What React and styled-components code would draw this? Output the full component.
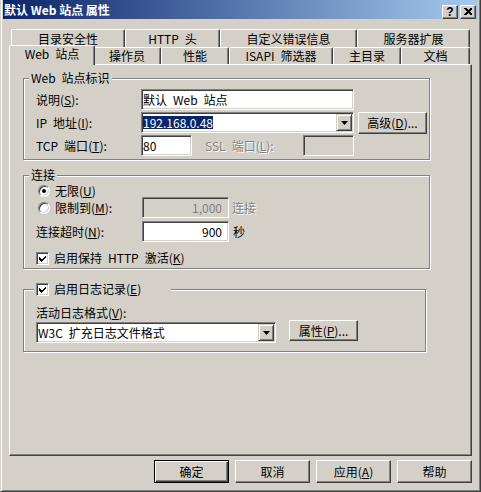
import React from 'react';
import styled, { createGlobalStyle, css } from 'styled-components';

const FACE = '#D4D0C8';
const SHADOW = '#808080';
const DARK = '#404040';
const SP = '\u2002';

const GlobalStyle = createGlobalStyle`
  html, body { margin: 0; padding: 0; background: ${FACE}; }
  body {
    font-family: "Noto Sans CJK SC", "Noto Sans", sans-serif;
    font-size: 12px;
    line-height: 14px;
    color: #000;
  }
  *, *::before, *::after { box-sizing: border-box; }
  u { text-decoration: underline; text-underline-offset: 1px; }
`;

const Window = styled.div`
  width: 481px;
  height: 492px;
  display: flex;
  flex-direction: column;
  background: ${FACE};
  border-left: 1px solid ${FACE};
  border-right: 1px solid ${DARK};
  border-bottom: 1px solid ${DARK};
  box-shadow: inset 1px 0 #fff, inset -1px -1px ${SHADOW};
  padding: 0 2px 2px 2px;
`;

const TitleBar = styled.div`
  height: 19px;
  flex: none;
  display: flex;
  align-items: flex-start;
  background: linear-gradient(to right, #0a246a, #a6caf0);
  padding: 0 2px 0 1px;
`;

const TitleText = styled.div`
  flex: 1;
  color: #fff;
  font-weight: bold;
  font-size: 12px;
  line-height: 19px;
  white-space: nowrap;
`;

const CaptionButtons = styled.div`
  display: flex;
  gap: 2px;
  margin-top: 5px;
`;

const CaptionButton = styled.div`
  width: 16px;
  height: 14px;
  background: ${FACE};
  border: 1px solid;
  border-color: #fff ${DARK} ${DARK} #fff;
  box-shadow: inset -1px -1px ${SHADOW};
  display: flex;
  align-items: center;
  justify-content: center;
  font: bold 12px/12px "Liberation Sans", Arial, sans-serif;
  padding-bottom: 1px;
`;

const Body = styled.div`
  flex: 1;
  display: flex;
  flex-direction: column;
  padding: 10px 6px 6px 6px;
`;

const TabRow = styled.div`
  display: flex;
  flex: none;
  height: ${(p) => p.$h}px;
  padding-left: 2px;
`;

const Tab = styled.div`
  width: ${(p) => p.$w}px;
  flex: none;
  display: flex;
  align-items: center;
  justify-content: center;
  background: ${FACE};
  border-top: 1px solid #fff;
  border-left: 1px solid #fff;
  border-right: 1px solid ${DARK};
  box-shadow: inset -1px 0 ${SHADOW};
  border-radius: 2px 2px 0 0;
  white-space: nowrap;
  ${(p) =>
    p.$active &&
    css`
      position: relative;
      z-index: 1;
      width: ${p.$w + 4}px;
      margin: -2px -2px -1px -2px;
      padding-bottom: 3px;
    `}
`;

const Panel = styled.div`
  height: 392px;
  flex: none;
  border: 1px solid;
  border-color: #fff ${DARK} ${DARK} #fff;
  box-shadow: inset -1px -1px ${SHADOW};
  padding: 6px 0 0 13px;
  display: flex;
  flex-direction: column;
  align-items: flex-start;
`;

const Group = styled.fieldset`
  width: ${(p) => p.$w}px;
  margin: ${(p) => p.$mt || 0}px 0 0 0;
  padding: 0;
  min-width: 0;
  border: 1px solid ${SHADOW};
  box-shadow: inset 1px 1px #fff, 1px 1px #fff;
`;

const Legend = styled.legend`
  margin-left: ${(p) => p.$ml}px;
  padding: 0 2px;
  height: 14px;
  line-height: 14px;
  width: ${(p) => (p.$w ? `${p.$w}px` : 'auto')};
  background: ${FACE};
  white-space: nowrap;
`;

const LegendInner = styled.span`
  display: flex;
  align-items: center;
  gap: 5px;
  height: 14px;
  white-space: nowrap;
`;

const GroupBody = styled.div`
  display: flex;
  flex-direction: column;
  padding: ${(p) => p.$pad};
`;

const Row = styled.div`
  display: flex;
  align-items: ${(p) => p.$align || 'center'};
  height: ${(p) => p.$h || 21}px;
  margin-top: ${(p) => p.$mt || 0}px;
  flex: none;
`;

const Label = styled.span`
  flex: none;
  display: flex;
  align-items: center;
  gap: 5px;
  width: ${(p) => (p.$w ? `${p.$w}px` : 'auto')};
  height: ${(p) => (p.$h ? `${p.$h}px` : 'auto')};
  margin-left: ${(p) => p.$ml || 0}px;
  white-space: nowrap;
  color: ${(p) => (p.$disabled ? SHADOW : '#000')};
  text-shadow: ${(p) => (p.$disabled ? '1px 1px 0 #fff' : 'none')};
`;

const Field = styled.div`
  width: ${(p) => p.$w}px;
  height: 21px;
  flex: none;
  display: flex;
  align-items: center;
  justify-content: ${(p) => (p.$right ? 'flex-end' : 'flex-start')};
  background: ${(p) => (p.$disabled ? FACE : '#fff')};
  color: ${(p) => (p.$disabled ? SHADOW : '#000')};
  border: 1px solid;
  border-color: ${SHADOW} #fff #fff ${SHADOW};
  box-shadow: inset 1px 1px ${DARK}, inset -1px -1px ${FACE};
  padding: ${(p) => (p.$combo ? '0' : p.$right ? '0 6px 0 1px' : '0 1px')};
  margin-top: ${(p) => p.$mt || 0}px;
  white-space: nowrap;
`;

const ComboText = styled.div`
  flex: 1;
  display: flex;
  align-items: center;
  height: 100%;
  padding-left: 1px;
`;

const Selected = styled.span`
  background: #0a246a;
  color: #fff;
  line-height: 13px;
`;

const DropButton = styled.div`
  width: 16px;
  height: 17px;
  flex: none;
  margin-right: 1px;
  background: ${FACE};
  border: 1px solid;
  border-color: ${FACE} ${DARK} ${DARK} ${FACE};
  box-shadow: inset 1px 1px #fff, inset -1px -1px ${SHADOW};
  display: flex;
  align-items: center;
  justify-content: center;
`;

const Button = styled.button`
  width: ${(p) => p.$w || 75}px;
  height: ${(p) => p.$h || 23}px;
  flex: none;
  margin: ${(p) => p.$m || 0};
  padding: 0;
  font: inherit;
  color: #000;
  background: ${FACE};
  border: 1px solid;
  border-color: #fff ${DARK} ${DARK} #fff;
  box-shadow: inset -1px -1px ${SHADOW};
  white-space: nowrap;
  ${(p) =>
    p.$default &&
    css`
      border-color: #000;
      box-shadow: inset 1px 1px #fff, inset -1px -1px ${DARK}, inset -2px -2px ${SHADOW};
    `}
`;

const Radio = styled.span`
  width: 12px;
  height: 12px;
  flex: none;
  margin-left: 2px;
  border-radius: 50%;
  background: #fff;
  border: 1px solid;
  border-color: ${SHADOW} #fff #fff ${SHADOW};
  box-shadow: inset 1px 1px ${DARK}, inset -1px -1px ${FACE};
  display: flex;
  align-items: center;
  justify-content: center;
  &::after {
    content: '';
    width: 4px;
    height: 4px;
    border-radius: 50%;
    background: #000;
    display: ${(p) => (p.$checked ? 'block' : 'none')};
  }
`;

const CheckBox = styled.span`
  width: 13px;
  height: 13px;
  flex: none;
  background: #fff;
  border: 1px solid;
  border-color: ${SHADOW} #fff #fff ${SHADOW};
  box-shadow: inset 1px 1px ${DARK}, inset -1px -1px ${FACE};
  display: flex;
  align-items: center;
  justify-content: center;
`;

const Footer = styled.div`
  display: flex;
  justify-content: flex-end;
  gap: 6px;
  margin-top: 4px;
`;

const CheckMark = () => (
  <svg width="7" height="7" viewBox="0 0 7 7" shapeRendering="crispEdges">
    <polygon points="0,2 2.5,4.5 7,0 7,3 2.5,7 0,5" fill="#000" />
  </svg>
);

const Arrow = () => (
  <svg width="7" height="4" viewBox="0 0 7 4">
    <polygon points="0,0 7,0 3.5,4" fill="#000" />
  </svg>
);

const CloseGlyph = () => (
  <svg width="8" height="7" viewBox="0 0 8 7" shapeRendering="crispEdges">
    <polygon points="0,0 2,0 8,6 8,7 6,7 0,1" fill="#000" />
    <polygon points="8,0 6,0 0,6 0,7 2,7 8,1" fill="#000" />
  </svg>
);

const Combo = ({ w, children, mt }) => (
  <Field $w={w} $mt={mt} $combo>
    <ComboText>{children}</ComboText>
    <DropButton>
      <Arrow />
    </DropButton>
  </Field>
);

const row1 = [
  ['目录安全性', 114],
  [`HTTP${SP}头`, 95],
  ['自定义错误信息', 137],
  ['服务器扩展', 113],
];

const row2 = [
  [`Web${SP}站点`, 82, true],
  ['操作员', 68],
  ['性能', 68],
  [`ISAPI${SP}筛选器`, 104],
  ['主目录', 68],
  ['文档', 69],
];

export default function App() {
  return (
    <>
      <GlobalStyle />
      <Window>
        <TitleBar>
          <TitleText>默认 Web 站点 属性</TitleText>
          <CaptionButtons>
            <CaptionButton>?</CaptionButton>
            <CaptionButton>
              <CloseGlyph />
            </CaptionButton>
          </CaptionButtons>
        </TitleBar>
        <Body>
          <TabRow $h={18}>
            {row1.map(([t, w]) => (
              <Tab key={t} $w={w}>
                {t}
              </Tab>
            ))}
          </TabRow>
          <TabRow $h={17}>
            {row2.map(([t, w, a]) => (
              <Tab key={t} $w={w} $active={a}>
                {t}
              </Tab>
            ))}
          </TabRow>
          <Panel>
            <Group $w={407}>
              <Legend $ml={5}>{`Web${SP}站点标识`}</Legend>
              <GroupBody $pad="4px 0 3px 12px" style={{ gap: 2 }}>
                <Row>
                  <Label $w={105}>
                    <span>
                      说明(<u>S</u>):
                    </span>
                  </Label>
                  <Field $w={213}>{`默认${SP}Web${SP}站点`}</Field>
                </Row>
                <Row $align="flex-start">
                  <Label $w={105} $h={21}>
                    <span>
                      {`IP${SP}地址`}(<u>I</u>):
                    </span>
                  </Label>
                  <Combo w={213}>
                    <Selected>192.168.0.48</Selected>
                  </Combo>
                  <Button $w={69} $h={22} $m="0 0 0 4px">
                    高级(<u>D</u>)...
                  </Button>
                </Row>
                <Row>
                  <Label $w={105}>
                    <span>
                      {`TCP${SP}端口`}(<u>T</u>):
                    </span>
                  </Label>
                  <Field $w={51}>80</Field>
                  <Label $w={98} $ml={13} $disabled>
                    <span>
                      {`SSL${SP}端口`}(<u>L</u>):
                    </span>
                  </Label>
                  <Field $w={51} $disabled />
                </Row>
              </GroupBody>
            </Group>

            <Group $w={407} $mt={8}>
              <Legend $ml={5}>连接</Legend>
              <GroupBody $pad="3px 0 3px 12px">
                <Row $h={12}>
                  <Label>
                    <Radio $checked />
                    <span>
                      无限(<u>U</u>)
                    </span>
                  </Label>
                </Row>
                <Row>
                  <Label $w={106}>
                    <Radio />
                    <span>
                      限制到(<u>M</u>):
                    </span>
                  </Label>
                  <Field $w={87} $right $disabled>
                    1,000
                  </Field>
                  <Label $ml={3} $disabled>
                    连接
                  </Label>
                </Row>
                <Row $mt={3}>
                  <Label $w={106}>
                    <span>
                      连接超时(<u>N</u>):
                    </span>
                  </Label>
                  <Field $w={87} $right>
                    900
                  </Field>
                  <Label $ml={4}>秒</Label>
                </Row>
                <Row $h={14} $mt={9}>
                  <Label>
                    <CheckBox>
                      <CheckMark />
                    </CheckBox>
                    <span>
                      {`启用保持${SP}HTTP${SP}激活`}(<u>K</u>)
                    </span>
                  </Label>
                </Row>
              </GroupBody>
            </Group>

            <Group $w={403} $mt={13}>
              <Legend $ml={10} $w={137}>
                <LegendInner>
                  <CheckBox>
                    <CheckMark />
                  </CheckBox>
                  <span>
                    启用日志记录(<u>E</u>)
                  </span>
                </LegendInner>
              </Legend>
              <GroupBody $pad="10px 0 8px 12px">
                <Row $h={14}>
                  <Label>
                    <span>
                      活动日志格式(<u>V</u>):
                    </span>
                  </Label>
                </Row>
                <Row $h={23} $align="flex-start">
                  <Combo w={240} mt={2}>
                    {`W3C${SP}扩充日志文件格式`}
                  </Combo>
                  <Button $w={69} $h={21} $m="0 0 0 13px">
                    属性(<u>P</u>)...
                  </Button>
                </Row>
              </GroupBody>
            </Group>
          </Panel>
          <Footer>
            <Button $default>确定</Button>
            <Button>取消</Button>
            <Button>
              应用(<u>A</u>)
            </Button>
            <Button>帮助</Button>
          </Footer>
        </Body>
      </Window>
    </>
  );
}
